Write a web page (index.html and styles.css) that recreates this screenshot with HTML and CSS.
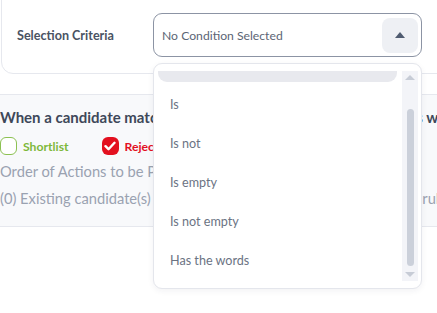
FILE: index.html
```html
<!DOCTYPE html>
<html lang="en">
<head>
	<meta charset="UTF-8">
	<title>Selection Criteria</title>
	<link rel="stylesheet" href="styles.css">
</head>
<body>
    <div class="page">
        <div class="criteria-card">
            <div class="criteria-label">Selection Criteria</div>
            <div class="select-box">
                <span class="select-value">No Condition Selected</span>
                <span class="select-toggle"><i class="caret-up"></i></span>
            </div>
        </div>

        <div class="actions">
            <div class="actions-title">When a candidate matches all the conditions above, the actions will be</div>
            <div class="actions-row">
                <label class="check check-green"><span class="box"></span>Shortlist</label>
                <label class="check check-red"><span class="box">
                    <svg width="12" height="10" viewBox="0 0 12 10"><path d="M1.5 5.2l3 3 6-6.4" fill="none" stroke="#fff" stroke-width="2.4" stroke-linecap="round" stroke-linejoin="round"/></svg>
                </span>Reject</label>
            </div>
            <div class="actions-note first">Order of Actions to be Performed</div>
            <div class="actions-note">(0) Existing candidate(s) will be affected after applying this special rule</div>
        </div>

        <!-- dropdown menu of the select -->
        <div class="dropdown">
            <div class="options">
                <ul class="option-list">
                    <li class="active"></li>
                    <li>Is</li>
                    <li>Is not</li>
                    <li>Is empty</li>
                    <li>Is not empty</li>
                    <li>Has the words</li>
                </ul>
            </div>
            <div class="scrollbar">
                <i class="arrow-up"></i>
                <div class="thumb-track"><div class="thumb"></div></div>
                <i class="arrow-down"></i>
            </div>
        </div>
    </div>
</body>
</html>
```

FILE: styles.css
```css
*{
    margin: 0;
    padding: 0;
    box-sizing: border-box;
    font-family: "Lato", "Open Sans", sans-serif;
}
body{
    background: #fff;
    overflow: hidden;
}
.page{
    position: relative;
    width: 437px;
    height: 313px;
    overflow: hidden;
}
/* top card */
.criteria-card{
    display: flex;
    align-items: center;
    width: 470px;
    margin: -12px 0 0 1px;
    padding: 24px 0 16px 15px;
    border: 1px solid #e6e8ee;
    border-radius: 12px;
}
.criteria-label{
    width: 136px;
    font-size: 12.6px;
    font-weight: 700;
    color: #4a5363;
}
.select-box{
    display: flex;
    align-items: center;
    justify-content: space-between;
    width: 269px;
    height: 44px;
    padding: 0 3px 0 8px;
    border: 1px solid #8c94a4;
    border-radius: 9px;
}
.select-value{
    font-size: 12.2px;
    color: #5c6575;
}
.select-toggle{
    display: flex;
    align-items: center;
    justify-content: center;
    width: 36px;
    height: 35px;
    background: #eef0f4;
    border-radius: 8px;
}
.caret-up{
    width: 0;
    height: 0;
    border-left: 5px solid transparent;
    border-right: 5px solid transparent;
    border-bottom: 6px solid #4f5b70;
}
/* actions section */
.actions{
    margin-top: 20px;
    height: 133px;
    padding-top: 13px;
    background: #f8f9fb;
    border-top: 1px solid #e6e8ee;
    border-bottom: 1px solid #e6e8ee;
    white-space: nowrap;
}
.actions-title{
    font-size: 15px;
    line-height: 18px;
    font-weight: 700;
    color: #3e4859;
}
.actions-row{
    display: flex;
    gap: 33px;
    margin-top: 11px;
    height: 18px;
}
.check{
    display: flex;
    align-items: center;
    gap: 6px;
    font-size: 12.2px;
    font-weight: 700;
}
.check .box{
    display: flex;
    align-items: center;
    justify-content: center;
    width: 17px;
    height: 18px;
    border-radius: 6px;
}
.check-green{
    color: #7db83a;
}
.check-green .box{
    border: 1.5px solid #8cc152;
    background: #fff;
}
.check-red{
    color: #e3101f;
}
.check-red .box{
    background: #e3101f;
}
.actions-note{
    margin-top: 9px;
    font-size: 14.7px;
    line-height: 18px;
    color: #9aa2b1;
}
.actions-note.first{
    margin-top: 7px;
}
/* dropdown */
.dropdown{
    position: absolute;
    left: 153px;
    top: 63px;
    width: 269px;
    height: 226px;
    display: flex;
    padding: 7px 3px 7px 4px;
    background: #fff;
    border: 1px solid #e4e6ec;
    border-radius: 9px;
    box-shadow: 0 2px 6px rgba(30, 40, 60, 0.06);
}
.options{
    flex: 1;
    overflow: hidden;
}
.option-list{
    list-style: none;
    margin-top: -28px;
    margin-right: 5px;
}
.option-list li{
    height: 39px;
    line-height: 39px;
    padding-left: 12px;
    font-size: 12.6px;
    color: #6b7383;
    border-radius: 9px;
}
.option-list li.active{
    margin-bottom: 3px;
    background: #e8e9ee;
}
.scrollbar{
    display: flex;
    flex-direction: column;
    align-items: center;
    width: 16px;
    background: #f3f4f8;
}
.arrow-up, .arrow-down{
    width: 0;
    height: 0;
    margin: 4px 0;
    border-left: 5px solid transparent;
    border-right: 5px solid transparent;
}
.arrow-up{
    border-bottom: 5px solid #c7ccd6;
}
.arrow-down{
    border-top: 5px solid #c7ccd6;
}
.thumb-track{
    flex: 1;
    width: 100%;
    display: flex;
    justify-content: center;
    padding: 25px 0 2px;
}
.thumb{
    width: 7px;
    height: 157px;
    background: #cbd0da;
    border-radius: 4px;
}
```
